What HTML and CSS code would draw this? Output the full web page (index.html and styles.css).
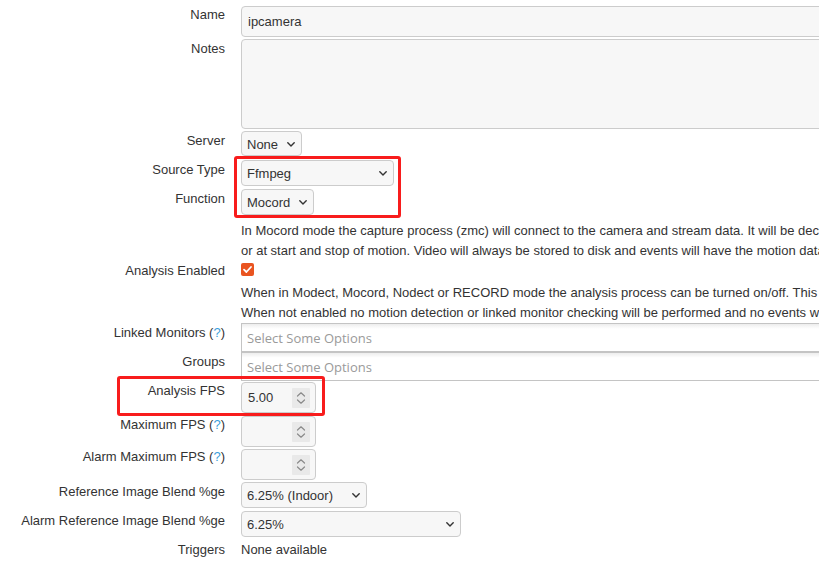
FILE: index.html
```html
<!DOCTYPE html>
<html lang="en">
<head>
<meta charset="utf-8">
<title>Monitor</title>
<link rel="stylesheet" href="styles.css">
</head>
<body>
<div class="page">
  <div class="form">
    <div class="lbl lbl-up">Name</div>
    <div class="val"><div class="input text-input">ipcamera</div></div>

    <div class="lbl">Notes</div>
    <div class="val"><div class="input textarea"></div></div>

    <div class="lbl">Server</div>
    <div class="val"><div class="input select sel-server"><span>None</span><svg class="chev" width="8" height="5" viewBox="0 0 8 5"><polyline points="0.8,0.8 4,4 7.2,0.8"/></svg></div></div>

    <div class="lbl">Source Type</div>
    <div class="val"><div class="input select sel-source"><span>Ffmpeg</span><svg class="chev" width="8" height="5" viewBox="0 0 8 5"><polyline points="0.8,0.8 4,4 7.2,0.8"/></svg></div></div>

    <div class="lbl">Function</div>
    <div class="val"><div class="input select sel-function"><span>Mocord</span><svg class="chev" width="8" height="5" viewBox="0 0 8 5"><polyline points="0.8,0.8 4,4 7.2,0.8"/></svg></div></div>

    <div class="lbl empty"></div>
    <div class="val desc1">
      <p class="desc">In Mocord mode the capture process (zmc) will connect to the camera and stream data. It will be decoded if necessary and analysed for motion, with recording done continuously</p>
      <p class="desc">or at start and stop of motion. Video will always be stored to disk and events will have the motion data included.</p>
    </div>

    <div class="lbl lbl-check">Analysis Enabled</div>
    <div class="val val-check">
      <svg class="checkbox" width="13" height="13" viewBox="0 0 13 13"><rect width="13" height="13" rx="2" fill="#e95420"/><polyline points="3,6.6 5.4,9 10,4" fill="none" stroke="#fff" stroke-width="1.8" stroke-linecap="round" stroke-linejoin="round"/></svg>
      <div class="desc2">
        <p class="desc">When in Modect, Mocord, Nodect or RECORD mode the analysis process can be turned on/off. This setting sets the default state when the process starts up.</p>
        <p class="desc">When not enabled no motion detection or linked monitor checking will be performed and no events will be created.</p>
      </div>
    </div>

    <div class="lbl lbl-up">Linked Monitors (<span class="help">?</span>)</div>
    <div class="val val-chosen"><div class="chosen">Select Some Options</div></div>

    <div class="lbl lbl-up">Groups</div>
    <div class="val val-chosen"><div class="chosen">Select Some Options</div></div>

    <div class="lbl lbl-up">Analysis FPS</div>
    <div class="val val-afps"><div class="input number"><span>5.00</span><svg class="spin" width="18" height="20" viewBox="0 0 18 20"><rect width="18" height="20" rx="1" fill="#e9e9e9"/><polyline points="5.5,8 9,4.8 12.5,8"/><polyline points="5.5,12 9,15.2 12.5,12"/></svg></div></div>

    <div class="lbl lbl-up">Maximum FPS (<span class="help">?</span>)</div>
    <div class="val"><div class="input number"><span></span><svg class="spin" width="18" height="20" viewBox="0 0 18 20"><rect width="18" height="20" rx="1" fill="#e9e9e9"/><polyline points="5.5,8 9,4.8 12.5,8"/><polyline points="5.5,12 9,15.2 12.5,12"/></svg></div></div>

    <div class="lbl lbl-up2">Alarm Maximum FPS (<span class="help">?</span>)</div>
    <div class="val"><div class="input number"><span></span><svg class="spin" width="18" height="20" viewBox="0 0 18 20"><rect width="18" height="20" rx="1" fill="#e9e9e9"/><polyline points="5.5,8 9,4.8 12.5,8"/><polyline points="5.5,12 9,15.2 12.5,12"/></svg></div></div>

    <div class="lbl">Reference Image Blend %ge</div>
    <div class="val"><div class="input select sel-blend"><span>6.25% (Indoor)</span><svg class="chev" width="8" height="5" viewBox="0 0 8 5"><polyline points="0.8,0.8 4,4 7.2,0.8"/></svg></div></div>

    <div class="lbl">Alarm Reference Image Blend %ge</div>
    <div class="val"><div class="input select sel-alarmblend"><span>6.25%</span><svg class="chev" width="8" height="5" viewBox="0 0 8 5"><polyline points="0.8,0.8 4,4 7.2,0.8"/></svg></div></div>

    <div class="lbl">Triggers</div>
    <div class="val val-text">None available</div>
  </div>

  <div class="mark mark-1"></div>
  <div class="mark mark-2"></div>
</div>
</body>
</html>
```

FILE: styles.css
```css
html, body {
  margin: 0;
  padding: 0;
  overflow: hidden;
  background: #fff;
}

body {
  font-family: "Liberation Sans", Arial, sans-serif;
  font-size: 13px;
  color: #333;
  width: 819px;
  height: 578px;
}

.page {
  position: relative;
  width: 819px;
  height: 578px;
  overflow: hidden;
}

.form {
  display: grid;
  grid-template-columns: 225px 1fr;
  column-gap: 16px;
  padding-top: 5px;
}

.lbl {
  text-align: right;
  line-height: 15px;
  padding: 3px 0 11px;
  white-space: nowrap;
}

.lbl-up {
  padding-top: 2px;
  padding-bottom: 12px;
}

.lbl-up2 {
  padding-top: 1px;
  padding-bottom: 13px;
}

.lbl-check {
  padding-top: 1px;
}

.help {
  color: #3a9fdc;
}

.val {
  padding: 1px 0;
  min-width: 0;
}

.input {
  box-sizing: border-box;
  display: flex;
  align-items: center;
  background: #f7f7f7;
  border: 1px solid #cccccc;
  border-radius: 4px;
  color: #333;
  line-height: 15px;
  padding: 0 6px;
}

.text-input {
  width: 760px;
  height: 31px;
}

.textarea {
  width: 760px;
  height: 90px;
}

.select {
  justify-content: space-between;
  padding: 1px 6px 0 5px;
  white-space: nowrap;
}

.chev {
  flex: none;
  fill: none;
  stroke: #333;
  stroke-width: 1.4;
  stroke-linecap: round;
  stroke-linejoin: round;
}

.sel-server { width: 61px; height: 25px; }
.sel-source { width: 153px; height: 26px; }
.sel-function { width: 73px; height: 26px; }
.sel-blend { width: 126px; height: 26px; }
.sel-alarmblend { width: 220px; height: 26px; }

.desc1 {
  padding: 4px 0 2px;
}

.desc {
  margin: 0;
  line-height: 19.5px;
  white-space: nowrap;
}

.val-check {
  padding: 1px 0 0;
}

.checkbox {
  display: block;
}

.desc2 {
  margin-top: 7px;
  margin-bottom: 1px;
}

.val-chosen {
  padding: 0;
}

.chosen {
  box-sizing: border-box;
  width: 760px;
  height: 29px;
  border: 1px solid #c4c4c4;
  background-color: #fff;
  background-image: linear-gradient(#eeeeee 1%, #ffffff 18%);
  font-family: "Open Sans", "Noto Sans", sans-serif;
  font-size: 13px;
  color: #9a9a9a;
  display: flex;
  align-items: center;
  padding-left: 5px;
  white-space: nowrap;
}

.number {
  width: 75px;
  height: 31px;
  justify-content: space-between;
  padding: 0 5px 0 6px;
}

.val-afps {
  padding-bottom: 2px;
}

.spin {
  flex: none;
  fill: none;
  stroke: #8a8a8a;
  stroke-width: 1.2;
  stroke-linecap: round;
  stroke-linejoin: round;
}

.spin rect {
  stroke: none;
}

.val-text {
  padding-top: 3px;
  line-height: 15px;
}

.mark {
  position: absolute;
  box-sizing: border-box;
  border: 3px solid #f81c1c;
  border-radius: 3px;
}

.mark-1 {
  left: 234px;
  top: 156px;
  width: 167px;
  height: 62px;
}

.mark-2 {
  left: 117px;
  top: 376px;
  width: 208px;
  height: 40px;
}
```
